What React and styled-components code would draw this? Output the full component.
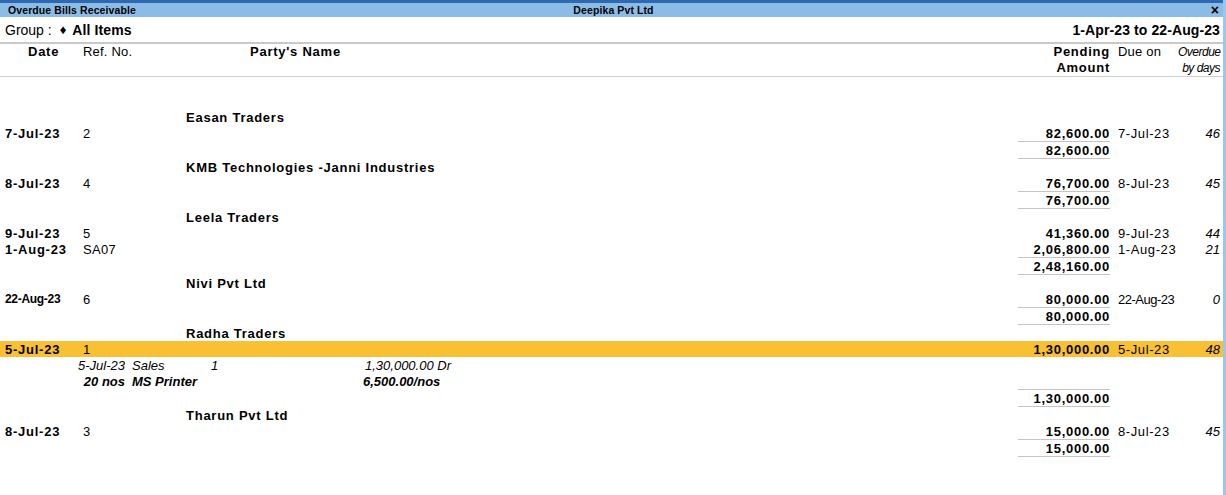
import React from "react";
import styled, { createGlobalStyle, css } from "styled-components";

const GlobalStyle = createGlobalStyle`
  html, body {
    margin: 0;
    padding: 0;
    background: #ffffff;
  }
  body {
    font-family: "Liberation Sans", Arial, sans-serif;
    color: #000;
  }
`;

const Window = styled.div`
  width: 1226px;
  height: 495px;
  box-sizing: border-box;
  border-right: 3px solid #9cc6ec;
  overflow: hidden;
  background: #fff;
`;

const TitleBar = styled.div`
  border-top: 3px solid #2e68b1;
  height: 14px;
  background: #8bbce6;
  display: grid;
  grid-template-columns: 1fr auto 1fr;
  align-items: center;
  padding: 0 4px 0 8px;
  font-size: 10.5px;
  font-weight: bold;
  line-height: 14px;
  letter-spacing: 0.1px;
`;

const Close = styled.span`
  justify-self: end;
  font-size: 14px;
  font-weight: bold;
  line-height: 14px;
`;

const GroupRow = styled.div`
  height: 25px;
  display: flex;
  align-items: center;
  justify-content: space-between;
  padding: 0 3px 0 5px;
  border-bottom: 2px solid #c9c9c9;
  font-size: 14px;
`;

const GroupLabel = styled.span`
  display: flex;
  align-items: center;
  gap: 6px;
`;

const Diamond = styled.span`
  font-size: 13px;
  margin-left: 2px;
`;

const Strong = styled.b`
  font-weight: bold;
  letter-spacing: 0.1px;
`;

const Cols = css`
  display: grid;
  grid-template-columns: 78px 103px 1fr 92px 68px 42px;
  padding: 0 3px 0 5px;
`;

const HeaderRow = styled.div`
  ${Cols};
  height: 32px;
  border-bottom: 1px solid #cfcfcf;
  font-size: 13px;
`;

const HeadCell = styled.div`
  font-weight: ${(p) => (p.$bold ? "bold" : "normal")};
  letter-spacing: ${(p) => (p.$bold ? "0.75px" : "0.2px")};
  text-align: ${(p) => p.$align || "left"};
  padding-left: ${(p) => p.$pl || 0}px;
  line-height: 16px;
  ${(p) =>
    p.$note &&
    css`
      font-style: italic;
      font-size: 12px;
      letter-spacing: -0.5px;
    `}
`;

const Body = styled.div`
  padding-top: 32px;
`;

const Row = styled.div`
  ${Cols};
  height: 16px;
  line-height: 17px;
  font-size: 13px;
  background: ${(p) => (p.$selected ? "#f9c033" : "transparent")};
`;

const PartyName = styled.div`
  grid-column: 3 / 4;
  font-weight: bold;
  letter-spacing: 0.75px;
  white-space: nowrap;
`;

const DateCell = styled.div`
  font-weight: bold;
  letter-spacing: 0.75px;
  white-space: nowrap;
  ${(p) =>
    p.$narrow &&
    css`
      font-size: 12px;
      letter-spacing: -0.3px;
    `}
`;

const RefCell = styled.div`
  grid-column: 2 / 4;
  letter-spacing: 0.3px;
`;

const Amount = styled.div`
  grid-column: 4 / 5;
  text-align: right;
  font-weight: bold;
  letter-spacing: 0.7px;
  white-space: nowrap;
`;

const DueCell = styled.div`
  padding-left: 8px;
  white-space: nowrap;
  letter-spacing: ${(p) => (p.$narrow ? "-0.5px" : "0.6px")};
`;

const Days = styled.div`
  text-align: right;
  font-style: italic;
`;

const TotalRow = styled.div`
  ${Cols};
  font-size: 13px;
  line-height: 17px;
`;

const TotalCell = styled.div`
  grid-column: 4 / 5;
  border-top: 1px solid #c4c4c4;
  border-bottom: 1px solid #c4c4c4;
  text-align: right;
  font-weight: bold;
  letter-spacing: 0.7px;
  height: 16px;
`;

const DetailRow = styled.div`
  display: grid;
  grid-template-columns: 120px 86px 152px auto;
  padding-left: 5px;
  height: 16px;
  line-height: 17px;
  font-size: 13px;
  font-style: italic;
  font-weight: ${(p) => (p.$bold ? "bold" : "normal")};
  white-space: nowrap;
`;

const DetailCell = styled.div`
  text-align: ${(p) => p.$align || "left"};
  padding-left: ${(p) => p.$pl || 0}px;
`;

const parties = [
  {
    name: "Easan Traders",
    total: "82,600.00",
    bills: [{ date: "7-Jul-23", ref: "2", amount: "82,600.00", due: "7-Jul-23", days: "46" }],
  },
  {
    name: "KMB Technologies -Janni Industries",
    total: "76,700.00",
    bills: [{ date: "8-Jul-23", ref: "4", amount: "76,700.00", due: "8-Jul-23", days: "45" }],
  },
  {
    name: "Leela Traders",
    total: "2,48,160.00",
    bills: [
      { date: "9-Jul-23", ref: "5", amount: "41,360.00", due: "9-Jul-23", days: "44" },
      { date: "1-Aug-23", ref: "SA07", amount: "2,06,800.00", due: "1-Aug-23", days: "21" },
    ],
  },
  {
    name: "Nivi Pvt Ltd",
    total: "80,000.00",
    bills: [
      { date: "22-Aug-23", ref: "6", amount: "80,000.00", due: "22-Aug-23", days: "0", narrow: true },
    ],
  },
  {
    name: "Radha Traders",
    total: "1,30,000.00",
    bills: [
      {
        date: "5-Jul-23",
        ref: "1",
        amount: "1,30,000.00",
        due: "5-Jul-23",
        days: "48",
        selected: true,
        details: [
          { a: "5-Jul-23", b: "Sales", c: "1", d: "1,30,000.00 Dr", pad: 2 },
          { a: "20 nos", b: "MS Printer", c: "", d: "6,500.00/nos", bold: true, pad: 0 },
        ],
      },
    ],
  },
  {
    name: "Tharun Pvt Ltd",
    total: "15,000.00",
    bills: [{ date: "8-Jul-23", ref: "3", amount: "15,000.00", due: "8-Jul-23", days: "45" }],
  },
];

const Bill = ({ bill }) => (
  <>
    <Row $selected={bill.selected}>
      <DateCell $narrow={bill.narrow}>{bill.date}</DateCell>
      <RefCell>{bill.ref}</RefCell>
      <Amount>{bill.amount}</Amount>
      <DueCell $narrow={bill.narrow}>{bill.due}</DueCell>
      <Days>{bill.days}</Days>
    </Row>
    {bill.details &&
      bill.details.map((d, i) => (
        <DetailRow key={i} $bold={d.bold}>
          <DetailCell $align="right">{d.a}</DetailCell>
          <DetailCell $pl={7}>{d.b}</DetailCell>
          <DetailCell>{d.c}</DetailCell>
          <DetailCell $pl={d.pad}>{d.d}</DetailCell>
        </DetailRow>
      ))}
  </>
);

const App = () => {
  return (
    <Window>
      <GlobalStyle />
      <TitleBar>
        <span>Overdue Bills Receivable</span>
        <span>Deepika Pvt Ltd</span>
        <Close>×</Close>
      </TitleBar>

      <GroupRow>
        <GroupLabel>
          Group :
          <Diamond>♦</Diamond>
          <Strong>All Items</Strong>
        </GroupLabel>
        <Strong>1-Apr-23 to 22-Aug-23</Strong>
      </GroupRow>

      <HeaderRow>
        <HeadCell $bold $pl={23}>Date</HeadCell>
        <HeadCell>Ref. No.</HeadCell>
        <HeadCell $bold $pl={64}>Party's Name</HeadCell>
        <HeadCell $bold $align="right">
          Pending
          <br />
          Amount
        </HeadCell>
        <HeadCell $pl={8}>Due on</HeadCell>
        <HeadCell $note $align="right">
          Overdue
          <br />
          by days
        </HeadCell>
      </HeaderRow>

      <Body>
        {parties.map((p) => (
          <React.Fragment key={p.name}>
            <Row>
              <PartyName>{p.name}</PartyName>
            </Row>
            {p.bills.map((b, i) => (
              <Bill key={i} bill={b} />
            ))}
            <TotalRow>
              <TotalCell>{p.total}</TotalCell>
            </TotalRow>
          </React.Fragment>
        ))}
      </Body>
    </Window>
  );
};

export default App;
